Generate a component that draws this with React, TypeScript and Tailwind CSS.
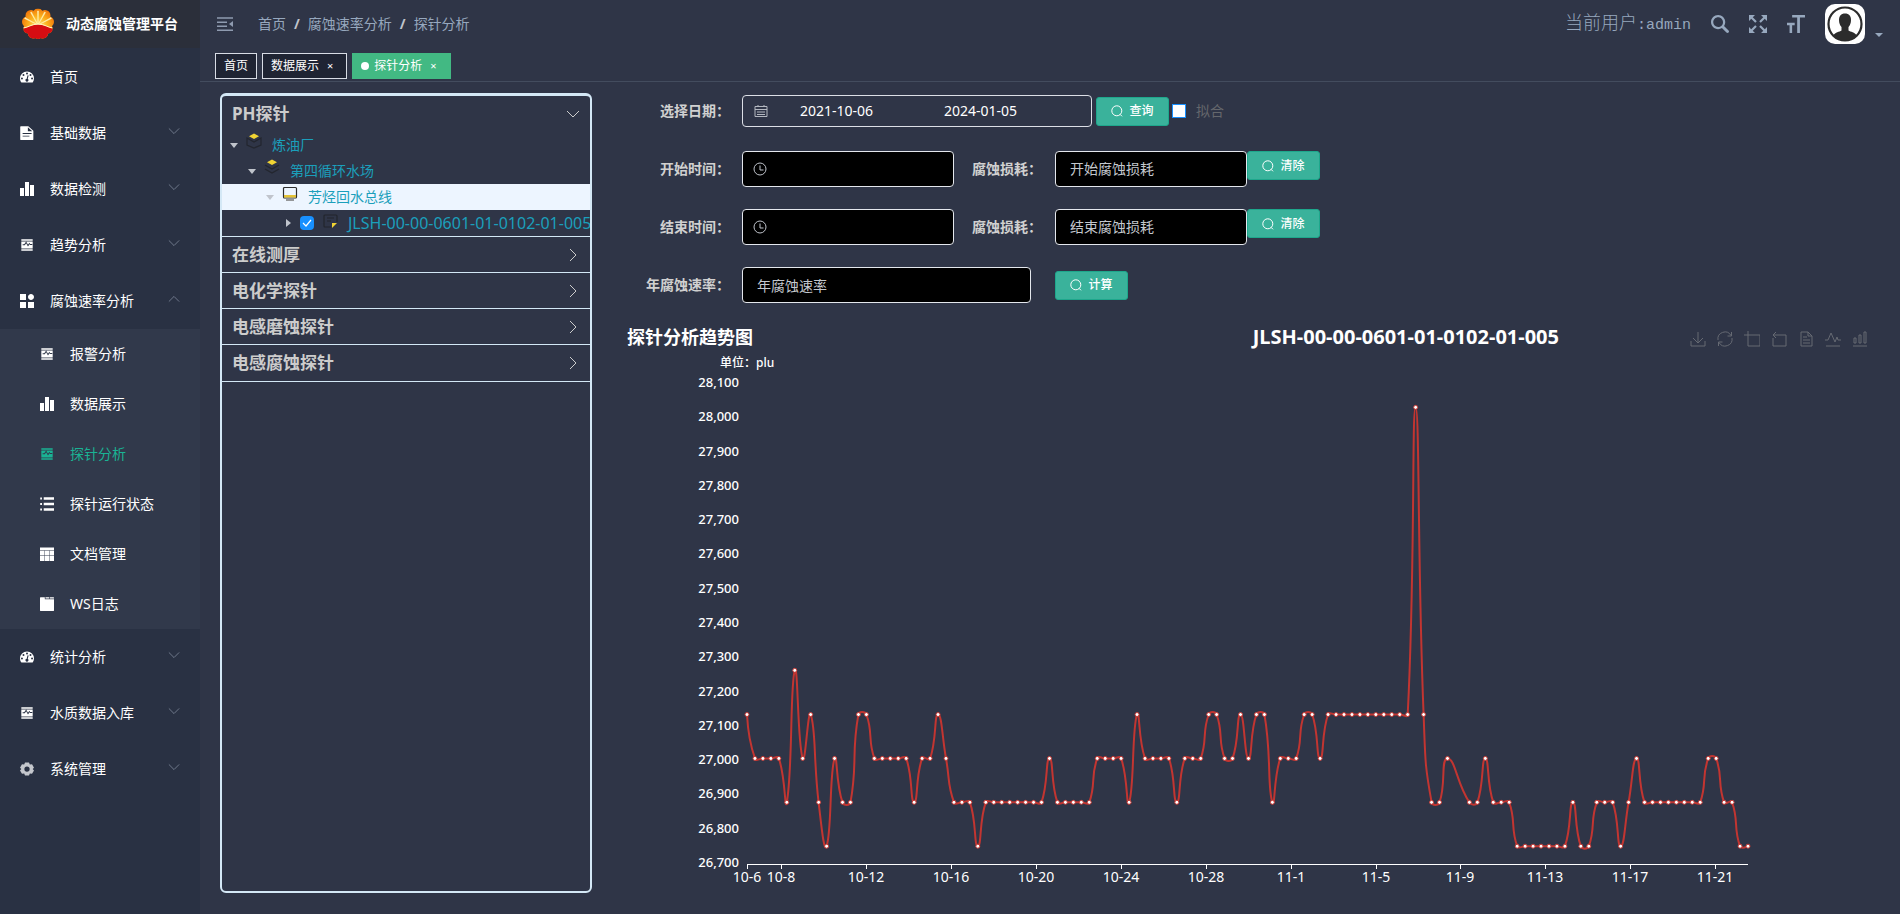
import { ReactNode } from "react";

type MenuItem = {
  label: string;
  icon: string;
  arrow?: "down" | "up";
  children?: { label: string; icon: string; active?: boolean }[];
};

const menu: MenuItem[] = [
  { label: "首页", icon: "dashboard" },
  { label: "基础数据", icon: "document", arrow: "down" },
  { label: "数据检测", icon: "chart", arrow: "down" },
  { label: "趋势分析", icon: "trend", arrow: "down" },
  {
    label: "腐蚀速率分析",
    icon: "component",
    arrow: "up",
    children: [
      { label: "报警分析", icon: "trend" },
      { label: "数据展示", icon: "chart" },
      { label: "探针分析", icon: "trend", active: true },
      { label: "探针运行状态", icon: "list" },
      { label: "文档管理", icon: "table" },
      { label: "WS日志", icon: "tab" },
    ],
  },
  { label: "统计分析", icon: "dashboard", arrow: "down" },
  { label: "水质数据入库", icon: "trend", arrow: "down" },
  { label: "系统管理", icon: "gear", arrow: "down" },
];

const icons: Record<string, ReactNode> = {
  dashboard: (
    <path
      fillRule="evenodd"
      d="M64 14a64 64 0 0 1 64 64c0 13-4 25-11 35a6 6 0 0 1-5 2H16a6 6 0 0 1-5-2A63 63 0 0 1 0 78a64 64 0 0 1 64-64zM18 69a9 9 0 1 0 0 18 9 9 0 0 0 0-18zm14-32a9 9 0 1 0 0 18 9 9 0 0 0 0-18zm32-14a9 9 0 1 0 0 18 9 9 0 0 0 0-18zm32 14a9 9 0 1 0 0 18 9 9 0 0 0 0-18zm14 32a9 9 0 1 0 0 18 9 9 0 0 0 0-18zM69 48l-8 31a14 14 0 1 0 10 2l8-31z"
    />
  ),
  document: (
    <path
      fillRule="evenodd"
      d="M8 2h68l46 42v76a8 8 0 0 1-8 8H10a8 8 0 0 1-8-8V10a8 8 0 0 1 6-8zm64 10v36h40zM24 64v9h82v-9zm0 24v9h62v-9z"
    />
  ),
  chart: <path d="M0 54.857h36.571V128H0V54.857zM91.429 27.43H128V128H91.429V27.429zM45.714 0h36.572v128H45.714V0z" />,
  trend: (
    <path
      fillRule="evenodd"
      d="M12 12h104v14H12zm8 20h96v64H12V32zm4 34h20l12-18 17 30 14-22 6 8h19v-9H92L86 43 73 62 56 33 39 57H24zM12 102h104v14H12z"
    />
  ),
  component: (
    <path d="M0 0h54.857v54.857H0V0zm0 73.143h54.857V128H0V73.143zm73.143 0H128V128H73.143V73.143zm27.428-18.286C115.72 54.857 128 42.577 128 27.43 128 12.28 115.72 0 100.571 0 85.423 0 73.143 12.28 73.143 27.429c0 15.148 12.28 27.428 27.428 27.428z" />
  ),
  list: (
    <path d="M2 4h16v18H2zM34 2h94v24H34zM2 55h16v18H2zM34 53h94v22H34zM2 106h16v18H2zM34 102h94v24H34z" />
  ),
  table: (
    <path d="M0 4h128v26H0zM0 34h40v42H0zM44 34h40v42H44zM88 34h40v42H88zM0 80h40v48H0zM44 80h40v48H44zM88 80h40v48H88z" />
  ),
  tab: <path d="M0 6a4 4 0 0 1 4-4h40v18h84v104a4 4 0 0 1-4 4H4a4 4 0 0 1-4-4zM50 2h34v12H50zM90 2h34a4 4 0 0 1 4 4v8H90z" />,
  gear: (
    <path
      fillRule="evenodd"
      fill="#c4c7cd"
      d="M46 4h36l8 18 20-2 18 32-12 12 12 14-18 30-20-2-8 18H46l-8-18-20 2L0 78l12-14L0 52l18-32 20 2zm18 36a24 24 0 1 0 0 48 24 24 0 0 0 0-48z"
    />
  ),
};

function MenuIcon({ name }: { name: string }) {
  return (
    <svg viewBox="0 0 128 128" className="size-3.5 shrink-0 fill-current" aria-hidden="true">
      {icons[name]}
    </svg>
  );
}

function Chevron({ dir, className }: { dir: "down" | "up" | "right"; className: string }) {
  const d = { down: "M1 4l6 6 6-6", up: "M1 10l6-6 6 6", right: "M4 1l6 6-6 6" }[dir];
  return (
    <svg viewBox="0 0 14 14" className={className} fill="none" stroke="currentColor" aria-hidden="true">
      <path d={d} />
    </svg>
  );
}

function Logo() {
  return (
    <svg viewBox="0 0 64 64" className="size-8" aria-hidden="true">
      <defs>
        <clipPath id="flower">
          <circle cx="32" cy="12" r="11" />
          <circle cx="18" cy="15" r="11" />
          <circle cx="46" cy="15" r="11" />
          <circle cx="11" cy="28" r="11" />
          <circle cx="53" cy="28" r="11" />
          <circle cx="13" cy="41" r="10" />
          <circle cx="51" cy="41" r="10" />
          <circle cx="22" cy="51" r="10" />
          <circle cx="42" cy="51" r="10" />
          <circle cx="32" cy="53" r="9" />
          <circle cx="32" cy="32" r="22" />
        </clipPath>
        <radialGradient id="sun" cx="0.5" cy="0.55" r="0.6">
          <stop offset="0" stopColor="#ffe680" />
          <stop offset="0.5" stopColor="#fbb01c" />
          <stop offset="1" stopColor="#ee6a05" />
        </radialGradient>
      </defs>
      <g clipPath="url(#flower)">
        <path d="M0 0h64v64H0z" fill="url(#sun)" />
        <path d="M32 34L31 6h2zM32 34L17 9l2-1zM32 34L47 9l-2-1zM32 34L5 21l1-2zM32 34l27-13-1-2z" fill="#fff6c8" stroke="#fff0a8" />
        <path d="M0 42c10-1 17-9 32-9s22 8 32 9v22H0z" fill="#d60d12" />
        <path d="M0 40c12 0 18-8 32-8s20 8 32 8" fill="none" stroke="#fff4c0" strokeWidth="2" />
      </g>
    </svg>
  );
}

function Sidebar() {
  return (
    <aside className="flex w-[200px] shrink-0 flex-col bg-[#293143] text-sm text-white">
      <div className="mb-px flex h-12 items-center gap-3 bg-[#2b2f3a] pl-[22px] font-semibold">
        <Logo />
        <h1>动态腐蚀管理平台</h1>
      </div>
      <nav>
        {menu.map((item) => (
          <div key={item.label}>
            <a href="#" className="flex h-14 items-center gap-4 pr-5 pl-5">
              <MenuIcon name={item.icon} />
              <span className="flex-1">{item.label}</span>
              {item.arrow && <Chevron dir={item.arrow} className="mb-1 size-3 text-[#7b8496]" />}
            </a>
            {item.children && (
              <div className="bg-[#31394b]">
                {item.children.map((c) => (
                  <a
                    key={c.label}
                    href="#"
                    className={`flex h-[50px] items-center gap-4 pl-10 ${c.active ? "text-[#1ab394]" : ""}`}
                  >
                    <MenuIcon name={c.icon} />
                    {c.label}
                  </a>
                ))}
              </div>
            )}
          </div>
        ))}
      </nav>
    </aside>
  );
}

function Navbar() {
  return (
    <header className="flex h-12 items-center text-sm text-[#97a8be]">
      <button aria-label="收起菜单" className="ml-4 text-[#8f9bb0]">
        <svg viewBox="0 0 18 16" className="h-4 w-[18px]" fill="none" stroke="currentColor" strokeWidth="1.4">
          <path d="M1 2h16M1 6.200h10M1 10.200h10M1 14.300h16" />
          <path d="M17 5v6l-4-3z" fill="currentColor" stroke="none" />
        </svg>
      </button>
      <nav className="ml-6 flex gap-2">
        <a href="#">首页</a>
        <b className="text-[#c0c4cc]">/</b>
        <a href="#">腐蚀速率分析</a>
        <b className="text-[#c0c4cc]">/</b>
        <span>探针分析</span>
      </nav>
      <div className="ml-auto flex items-center pr-[17px]">
        <span className="mr-5 font-['Liberation_Mono','Noto_Sans_CJK_SC',monospace] text-[15px]">
          <span className="text-lg font-light">当前用户</span>:admin
        </span>
        <button aria-label="搜索">
          <svg viewBox="0 0 128 128" className="size-[18px] fill-current">
            <path d="M124.884 109.812L94.256 79.166c-.357-.357-.757-.629-1.129-.914a50.366 50.366 0 0 0 8.186-27.59C101.327 22.689 78.656 0 50.67 0 22.685 0 0 22.688 0 50.663c0 27.989 22.685 50.663 50.656 50.663 10.186 0 19.643-3.03 27.6-8.201.286.385.557.771.9 1.114l30.628 30.632a10.633 10.633 0 0 0 7.543 3.129c2.728 0 5.457-1.043 7.543-3.115 4.171-4.157 4.171-10.915.014-15.073M50.671 85.338C31.557 85.338 16 69.78 16 50.663c0-19.102 15.557-34.661 34.67-34.661 19.115 0 34.657 15.559 34.657 34.675 0 19.102-15.557 34.661-34.656 34.661" />
          </svg>
        </button>
        <button aria-label="全屏" className="ml-5">
          <svg viewBox="0 0 18 18" className="size-[18px]" fill="none" stroke="currentColor" strokeWidth="2.200">
            <path d="M2 2l5 5M16 2l-5 5M2 16l5-5M16 16l-5-5" />
            <path d="M0 0h6L0 6zM18 0v6l-6-6zM0 18v-6l6 6zM18 18h-6l6-6z" fill="currentColor" stroke="none" />
          </svg>
        </button>
        <button aria-label="布局大小" className="ml-5">
          <svg viewBox="0 0 128 128" className="size-[18px] fill-current">
            <path d="M0 54.857h54.796v18.286H36.531V128H18.265V73.143H0V54.857zm127.857-36.571H91.935V128H72.456V18.286H36.534V0h91.326l-.003 18.286z" />
          </svg>
        </button>
        <button aria-label="用户" className="ml-5 flex items-end gap-2.5">
          <svg viewBox="0 0 40 40" className="size-10 rounded-[10px] bg-white">
            <circle cx="20" cy="20" r="16.500" fill="none" stroke="#2c2c2c" strokeWidth="2.200" />
            <path
              d="M20 9.500c4 0 6 2.500 6 6.500 0 3-1 5.500-2.500 7v3.500c2 1.500 6.500 1.500 8 5A16 16 0 0 1 20 36.500 16 16 0 0 1 8.500 31.500c1.500-3.500 6-3.500 8-5V23C15 21.500 14 19 14 16c0-4 2-6.500 6-6.500z"
              fill="#2c2c2c"
            />
          </svg>
          <svg viewBox="0 0 8 4" className="mb-[7px] h-1 w-2 fill-current">
            <path d="M0 0h8L4 4z" />
          </svg>
        </button>
      </div>
    </header>
  );
}

function TagsView() {
  const tag = "flex h-[26px] items-center border px-2";
  return (
    <div className="flex h-[34px] gap-[5px] border-b border-[#434c5e] pt-[5px] pl-[15px] text-xs text-white">
      <a href="#" className={`${tag} border-[#d8dce5] bg-[#1f2433]`}>
        首页
      </a>
      <a href="#" className={`${tag} gap-2 border-[#d8dce5] bg-[#1f2433] pr-[13px]`}>
        数据展示 <span className="text-[11px]">×</span>
      </a>
      <a href="#" className={`${tag} border-[#42b983] bg-[#42b983] pr-[13px]`}>
        <i className="mr-[5px] size-2 rounded-full bg-white"></i>
        探针分析 <span className="ml-2 text-[11px]">×</span>
      </a>
    </div>
  );
}

function Caret({ right }: { right?: boolean }) {
  return (
    <svg viewBox="0 0 8 8" className="size-2 shrink-0 fill-[#c0c4cc]" aria-hidden="true">
      <path d={right ? "M2 0l5 4-5 4z" : "M0 2h8L4 7z"} />
    </svg>
  );
}

function ProbePanel() {
  const row = "flex h-[26px] items-center";
  const title = "flex h-9 w-full items-center justify-between pr-2.5 pl-2.5 text-[17px] font-bold text-[#ccc]";
  return (
    <section className="w-[372px] shrink-0 overflow-hidden rounded-md border-2 border-t-[3px] border-[#d4e8f6]">
      <button className={title}>
        PH探针
        <Chevron dir="down" className="size-3.5" />
      </button>
      <div className="text-sm text-[#1b9fbb]">
        <div className={`${row} pl-2`}>
          <Caret />
          <svg viewBox="0 0 16 16" className="mr-2.5 mb-2 ml-2 size-4">
            <path d="M1 5v7l7 3 7-3V5L8 9z" fill="none" stroke="#23262f" strokeWidth="1.200" />
            <path d="M8 .5l5 2.800L8 6 3 3.300z" fill="#f1d433" />
          </svg>
          炼油厂
        </div>
        <div className={`${row} pl-[26px]`}>
          <Caret />
          <svg viewBox="0 0 16 16" className="mr-2.5 mb-2 ml-2 size-4">
            <path d="M1 6l7 4 7-4M1 10l7 4 7-4" fill="none" stroke="#23262f" strokeWidth="1.400" />
            <path d="M8 .5l5 2.800L8 6 3 3.300z" fill="#f1d433" />
          </svg>
          第四循环水场
        </div>
        <div className={`${row} bg-[#edf5ff] pl-11`}>
          <Caret />
          <svg viewBox="0 0 16 16" className="mr-2.5 mb-1.5 ml-2 size-4">
            <rect x="1.500" y="1.500" width="13" height="10.500" rx="1" fill="none" stroke="#2d2d2d" strokeWidth="1.200" />
            <path d="M2 9h12v2.500H2z" fill="#e3c235" />
            <path d="M4 14h8" stroke="#777" strokeWidth="1.300" />
          </svg>
          芳烃回水总线
        </div>
        <div className={`${row} pl-[62px]`}>
          <Caret right />
          <label className="flex items-center whitespace-nowrap">
            <input type="checkbox" defaultChecked className="peer sr-only" />
            <span className="ml-2 flex size-3.5 items-center justify-center rounded-sm bg-[#1890ff]">
              <svg viewBox="0 0 12 12" className="size-3" fill="none" stroke="#fff" strokeWidth="1.200">
                <path d="M2 6l3 3 5-6" />
              </svg>
            </span>
            <svg viewBox="0 0 16 16" className="mr-2.5 mb-1 ml-2 size-4">
              <path d="M9 14H3a1 1 0 0 1-1-1V3a1 1 0 0 1 1-1h11a1 1 0 0 1 1 1v6M5 5h7M5 8h4" fill="none" stroke="#22252d" strokeWidth="1.200" />
              <path d="M10 10h5l-5 5z" fill="#f1d433" />
            </svg>
            <span className="text-base">JLSH-00-00-0601-01-0102-01-005</span>
          </label>
        </div>
      </div>
      <div className="border-y border-[#d4e8f6] divide-y divide-[#d4e8f6]">
        {["在线测厚", "电化学探针", "电感磨蚀探针", "电感腐蚀探针"].map((name) => (
          <button key={name} className={title}>
            {name}
            <Chevron dir="right" className="size-3.5" />
          </button>
        ))}
      </div>
    </section>
  );
}

function SearchButton({ children }: { children: string }) {
  return (
    <button
      type="button"
      className="flex h-[29px] w-[73px] shrink-0 items-center justify-center gap-1.5 rounded-[3px] border border-[#1ea78c] bg-[#3ab29b] text-xs font-medium text-white"
    >
      <svg viewBox="0 0 12 12" className="size-3" fill="none" stroke="currentColor">
        <circle cx="5.8" cy="5.8" r="5" />
        <path d="M9 9.300l2 2" />
      </svg>
      {children}
    </button>
  );
}

function TimeInput({ id }: { id: string }) {
  return (
    <div className="flex h-9 w-[212px] items-center rounded border border-[#e4e7ed] bg-black pl-2.5">
      <svg viewBox="0 0 14 14" className="size-3.5 shrink-0" fill="none" stroke="#c0c4cc">
        <circle cx="7" cy="7" r="6" />
        <path d="M7 3.500V8h3.500" />
      </svg>
      <input id={id} type="text" className="ml-2 w-full bg-transparent outline-none" />
    </div>
  );
}

function SearchForm() {
  const label = "w-[130px] shrink-0 pr-3 text-right font-bold text-[#d0d0d0]";
  const text = "h-9 rounded border border-[#e4e7ed] bg-black px-3.5 text-white outline-none placeholder:text-[#c4c8ce]";
  return (
    <form className="flex flex-col gap-[22px] text-sm">
      <div className="flex h-[34px] items-start">
        <label htmlFor="from" className={`${label} leading-8`}>
          选择日期：
        </label>
        <div className="flex h-8 w-[350px] items-center rounded border border-[#dcdfe6] pl-[11px] text-white">
          <svg viewBox="0 0 14 14" className="size-3.5 shrink-0" fill="none" stroke="#b4b8c0">
            <path d="M1 2.500h12v10H1zM1 5.500h12M4 1v2M10 1v2M3 8h8M3 10.500h8" />
          </svg>
          <input id="from" type="text" defaultValue="2021-10-06" className="w-[144px] bg-transparent pl-8 outline-none" />
          <input aria-label="结束日期" type="text" defaultValue="2024-01-05" className="w-[144px] bg-transparent pl-8 outline-none" />
        </div>
        <div className="flex h-8 items-center pl-1">
          <SearchButton>查询</SearchButton>
          <label className="ml-[3px] flex items-center gap-2.5 text-[#65676c]">
            <input type="checkbox" className="size-3.5 appearance-none border border-[#1890ff] bg-white" />
            拟合
          </label>
        </div>
      </div>
      {["开始", "结束"].map((name) => (
        <div key={name} className="flex items-start leading-9">
          <label htmlFor={`${name}-time`} className={label}>
            {name}时间：
          </label>
          <TimeInput id={`${name}-time`} />
          <label htmlFor={`${name}-loss`} className="ml-[18px] pr-[13px] font-bold text-[#d0d0d0]">
            腐蚀损耗：
          </label>
          <input id={`${name}-loss`} type="text" placeholder={`${name}腐蚀损耗`} className={`w-48 ${text}`} />
          <SearchButton>清除</SearchButton>
        </div>
      ))}
      <div className="flex items-center">
        <label htmlFor="rate" className={label}>
          年腐蚀速率：
        </label>
        <input id="rate" type="text" placeholder="年腐蚀速率" className={`mr-6 w-[289px] ${text}`} />
        <SearchButton>计算</SearchButton>
      </div>
    </form>
  );
}

// Runs of equal readings: [value, count]
const before: [number, number][] = [
  [27133, 1], [27005, 4], [26877, 1], [27262, 1], [27005, 1], [27133, 1], [26877, 1], [26749, 1],
  [27005, 1], [26877, 2], [27133, 2], [27005, 5], [26877, 1], [27005, 2], [27133, 1], [27005, 1],
  [26877, 3], [26749, 1], [26877, 8], [27005, 1], [26877, 5], [27005, 4], [26877, 1], [27133, 1],
  [27005, 4], [26877, 1], [27005, 3], [27133, 2], [27005, 2], [27133, 1], [27005, 1], [27133, 2],
  [26877, 1], [27005, 3], [27133, 2], [27005, 1], [27133, 11], [28029, 1], [27133, 1], [26877, 2],
  [27005, 1],
];
const after: [number, number][] = [
  [26877, 2], [27005, 1], [26877, 3], [26749, 7], [26877, 1], [26749, 2], [26877, 3], [26749, 1],
  [26877, 1], [27005, 1], [26877, 8], [27005, 2], [26877, 2], [26749, 2],
];

const STEP = 7.96;
const BOTTOM = 512;
const yOf = (v: number) => BOTTOM - ((v - 26700) / 1400) * 480;
const expand = (runs: [number, number][], x0: number) =>
  runs.flatMap(([v, n]) => Array<number>(n).fill(v)).map((v, i) => [x0 + i * STEP, yOf(v)]);
const points = [...expand(before, 135), ...expand(after, 857.4)];

function smoothPath(pts: number[][]) {
  const dist = (a: number[], b: number[]) => Math.hypot(a[0] - b[0], a[1] - b[1]);
  let d = `M${pts[0][0]} ${pts[0][1]}`;
  let cp = pts[0];
  for (let i = 1; i < pts.length; i++) {
    const p = pts[i];
    const prev = pts[i - 1];
    const next = pts[i + 1] ?? p;
    const ratio = dist(p, next) / (dist(p, next) + dist(p, prev));
    const v = [next[0] - prev[0], next[1] - prev[1]];
    const k = i === pts.length - 1 ? 0 : 0.5;
    const c2 = [p[0] - v[0] * k * (1 - ratio), p[1] - v[1] * k * (1 - ratio)];
    d += `C${cp[0].toFixed(1)} ${cp[1].toFixed(1)} ${c2[0].toFixed(1)} ${c2[1].toFixed(1)} ${p[0].toFixed(1)} ${p[1].toFixed(1)}`;
    cp = [p[0] + v[0] * k * ratio, p[1] + v[1] * k * ratio];
  }
  return d;
}

const yLabels = Array.from({ length: 15 }, (_, i) => 26700 + i * 100);
const xLabels: [string, number][] = [
  ["10-6", 135], ["10-8", 169], ["10-12", 254], ["10-16", 339], ["10-20", 424], ["10-24", 509], ["10-28", 594],
  ["11-1", 679], ["11-5", 764], ["11-9", 848], ["11-13", 933], ["11-17", 1018], ["11-21", 1103],
];

const tools: [string, string][] = [
  ["保存为图片", "M1 10v5h14v-5M8 1v11M3 7l5 5 5-5"],
  ["刷新", "M1 9A7 7 0 0 1 14 4.500M15 7A7 7 0 0 1 2 11.500M14.500 1v4h-4M1.500 15v-4h4"],
  ["区域缩放", "M4 0v15h12V4H0"],
  ["区域缩放还原", "M2 4h13v11H2V7M5 1L2 4l3 3"],
  ["数据视图", "M3 1h7l4 4v10H3zM10 1v4h4M5 6h4M5 9h7M5 12h7"],
  ["切换为折线图", "M0 9h3l3-7 4 9 2-5 1 3h3M1 15h14"],
  ["切换为柱状图", "M2 12V7h2v5zM7 12V4h2v8zM12 12V1h2v11zM1 15h14"],
];

function ProbeChart() {
  return (
    <section className="text-white">
      <div className="flex h-7 items-center pr-8 pl-[15px]">
        <h2 className="text-lg font-bold">探针分析趋势图</h2>
        <h3 className="ml-auto text-xl font-bold">JLSH-00-00-0601-01-0102-01-005</h3>
        <div className="mt-[3px] ml-[131px] flex gap-[11px]">
          {tools.map(([name, d]) => (
            <button key={name} aria-label={name}>
              <svg viewBox="0 0 16 16" className="size-4" fill="none" stroke="#666a73">
                <path d={d} />
              </svg>
            </button>
          ))}
        </div>
      </div>
      <svg viewBox="0 0 1288 536" className="w-full">
        <g fill="#fff" className="text-sm">
          <text x="108" y="16" className="text-xs font-medium">
            单位：plu
          </text>
          {yLabels.map((v) => (
            <text key={v} x="127" y={yOf(v) + 4} textAnchor="end" className="text-[13px] font-medium">
              {v.toLocaleString("en-US")}
            </text>
          ))}
          {xLabels.map(([label, x]) => (
            <text key={label} x={x} y="531" textAnchor="middle">
              {label}
            </text>
          ))}
        </g>
        <path d={`M135 513.500H1136${xLabels.map(([, x]) => `M${x + 0.5} 513v5`).join("")}`} stroke="#fff" />
        <path d={smoothPath(points)} fill="none" stroke="#c23531" strokeWidth="2" />
        {points.map(([x, y], i) => (
          <circle key={i} cx={x} cy={y} r="2" fill="#fff" stroke="#c23531" />
        ))}
      </svg>
    </section>
  );
}

export default function App() {
  return (
    <div className="flex min-h-screen bg-[#2f3547] font-['Noto_Sans','Noto_Sans_CJK_SC',sans-serif]">
      <Sidebar />
      <div className="flex min-w-0 flex-1 flex-col">
        <Navbar />
        <TagsView />
        <main className="flex flex-1 gap-5 pt-[11px] pb-[21px] pl-5">
          <ProbePanel />
          <div className="flex min-w-0 flex-1 flex-col gap-5 pt-0.5">
            <SearchForm />
            <ProbeChart />
          </div>
        </main>
      </div>
    </div>
  );
}
